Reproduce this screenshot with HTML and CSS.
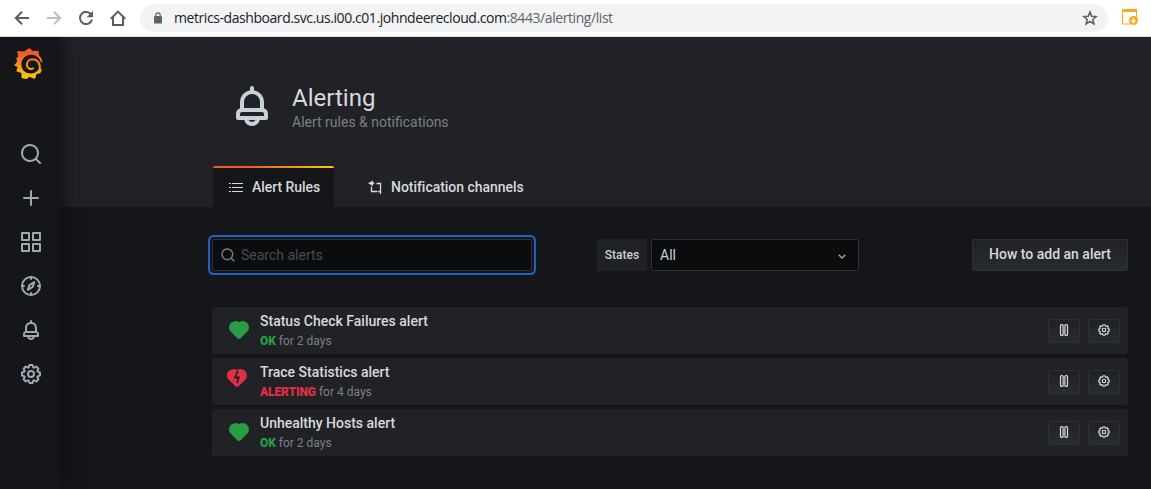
FILE: index.html
```html
<!DOCTYPE html>
<html lang="en">
<head>
<meta charset="utf-8">
<title>Alerting</title>
<link rel="stylesheet" href="styles.css">
</head>
<body>
<svg class="defs" width="0" height="0" aria-hidden="true">
  <defs>
    <symbol id="search" viewBox="0 0 24 24"><path d="M21.71,20.29,18,16.61A9,9,0,1,0,16.61,18l3.68,3.68a1,1,0,0,0,1.42,0A1,1,0,0,0,21.71,20.29ZM11,18a7,7,0,1,1,7-7A7,7,0,0,1,11,18Z"/></symbol>
    <symbol id="plus" viewBox="0 0 24 24"><path d="M19,11H13V5a1,1,0,0,0-2,0v6H5a1,1,0,0,0,0,2h6v6a1,1,0,0,0,2,0V13h6a1,1,0,0,0,0-2Z"/></symbol>
    <symbol id="apps" viewBox="0 0 24 24"><path d="M10,13H3a1,1,0,0,0-1,1v7a1,1,0,0,0,1,1h7a1,1,0,0,0,1-1V14A1,1,0,0,0,10,13ZM9,20H4V15H9ZM21,2H14a1,1,0,0,0-1,1v7a1,1,0,0,0,1,1h7a1,1,0,0,0,1-1V3A1,1,0,0,0,21,2ZM20,9H15V4h5Zm1,4H14a1,1,0,0,0-1,1v7a1,1,0,0,0,1,1h7a1,1,0,0,0,1-1V14A1,1,0,0,0,21,13Zm-1,7H15V15h5ZM10,2H3A1,1,0,0,0,2,3v7a1,1,0,0,0,1,1h7a1,1,0,0,0,1-1V3A1,1,0,0,0,10,2ZM9,9H4V4H9Z"/></symbol>
    <symbol id="compass" viewBox="0 0 24 24"><g fill="none" stroke="currentColor" stroke-width="2" stroke-linecap="round" stroke-linejoin="round"><circle cx="12" cy="12" r="9"/><path d="M12 3v2M12 19v2M3 12h2M19 12h2M15.3 8.2l-1.600 4.700-4.900 2.900 1.600-4.700z" /></g></symbol>
    <symbol id="bell" viewBox="0 0 24 24"><path d="M18,13.18V10a6,6,0,0,0-5-5.91V3a1,1,0,0,0-2,0V4.09A6,6,0,0,0,6,10v3.18A3,3,0,0,0,4,16v2a1,1,0,0,0,1,1H8.14a4,4,0,0,0,7.72,0H19a1,1,0,0,0,1-1V16A3,3,0,0,0,18,13.18ZM8,10a4,4,0,0,1,8,0v3H8Zm4,10a2,2,0,0,1-1.72-1h3.44A2,2,0,0,1,12,20Zm6-3H6V16a1,1,0,0,1,1-1H17a1,1,0,0,1,1,1Z"/></symbol>
    <symbol id="cog" viewBox="0 0 24 24"><path d="M21.32,9.55l-1.89-.63.89-1.78A1,1,0,0,0,20.13,6L18,3.87a1,1,0,0,0-1.15-.19l-1.78.89-.63-1.89A1,1,0,0,0,13.5,2h-3a1,1,0,0,0-.95.68L8.92,4.57,7.14,3.68A1,1,0,0,0,6,3.87L3.87,6a1,1,0,0,0-.19,1.15l.89,1.78-1.89.63A1,1,0,0,0,2,10.5v3a1,1,0,0,0,.68.95l1.89.63-.89,1.78A1,1,0,0,0,3.87,18L6,20.13a1,1,0,0,0,1.15.19l1.78-.89.63,1.89a1,1,0,0,0,.95.68h3a1,1,0,0,0,.95-.68l.63-1.89,1.78.89A1,1,0,0,0,18,20.13L20.13,18a1,1,0,0,0,.19-1.15l-.89-1.78,1.89-.63A1,1,0,0,0,22,13.5v-3A1,1,0,0,0,21.32,9.55ZM20,12.78l-1.2.4A2,2,0,0,0,17.64,16l.57,1.14-1.1,1.1L16,17.64a2,2,0,0,0-2.79,1.16l-.4,1.2H11.22l-.4-1.2A2,2,0,0,0,8,17.64l-1.14.57-1.1-1.1L6.36,16A2,2,0,0,0,5.2,13.18L4,12.78V11.22l1.2-.4A2,2,0,0,0,6.36,8L5.79,6.89l1.1-1.1L8,6.36A2,2,0,0,0,10.82,5.2l.4-1.2h1.56l.4,1.2A2,2,0,0,0,16,6.36l1.14-.57,1.1,1.1L17.64,8a2,2,0,0,0,1.16,2.79l1.2.4ZM12,8a4,4,0,1,0,4,4A4,4,0,0,0,12,8Zm0,6a2,2,0,1,1,2-2A2,2,0,0,1,12,14Z"/></symbol>
    <symbol id="heart" viewBox="0 0 24 24"><path d="M20.16,5A6.29,6.29,0,0,0,12,4.36a6.27,6.27,0,0,0-8.16,9.48l6.21,6.22a2.78,2.78,0,0,0,3.9,0l6.21-6.22A6.27,6.27,0,0,0,20.16,5Z"/></symbol>
    <symbol id="pause" viewBox="0 0 14 14"><g fill="none" stroke="currentColor" stroke-width="1.2"><rect x="3.5" y="1.6" width="2.6" height="10.8" rx="1"/><rect x="7.9" y="1.6" width="2.6" height="10.8" rx="1"/></g></symbol>
  </defs>
</svg>

<div class="browser">
  <svg class="nav" width="16" height="16" viewBox="0 0 16 16"><path d="M15 8H2.5M8 1.8L1.8 8 8 14.2"/></svg>
  <svg class="nav nav-off" width="16" height="16" viewBox="0 0 16 16"><path d="M1 8h12.500M8 1.800L14.200 8 8 14.200"/></svg>
  <svg class="nav" width="16" height="16" viewBox="0 0 16 16"><path d="M13.300 4.800A6.100 6.100 0 1 0 14 9.500"/><path class="solid" d="M15 .8V7.200H8.600z"/></svg>
  <svg class="nav" width="16" height="16" viewBox="0 0 16 16"><path d="M.8 8.700L8 1.600l7.200 7.100M3 7.500V15h10V7.500"/></svg>
  <div class="omnibox">
    <svg class="lock" width="8" height="12" viewBox="0 0 8 12"><rect x="0" y="4" width="8" height="7.500" rx="1"/><path class="line" d="M1.800 4.500V3a2.200 2.200 0 0 1 4.400 0v1.500" stroke-width="1.200"/></svg>
    <span class="url">metrics-dashboard.svc.us.i00.c01.johndeerecloud.com<span class="path">:8443/alerting/list</span></span>
    <svg class="star" width="16" height="16" viewBox="0 0 16 16"><path d="M8 2l1.750 4.200 4.500.35-3.450 2.950 1.080 4.400L8 11.500l-3.880 2.400 1.080-4.400L1.750 6.550l4.500-.35z"/></svg>
  </div>
  <svg class="ext" width="17" height="17" viewBox="0 0 17 17"><path class="line" d="M14.500 1v8M.5 1v14h8"/><path d="M0 0h15v3H0z"/><circle cx="11.500" cy="11.500" r="4.500"/><path d="M11.500 9v4.500M9.500 11.500l2 2 2-2" fill="none" stroke="#fff" stroke-width="1.300"/></svg>
</div>

<div class="app">
  <nav class="sidebar">
    <svg class="logo" width="30" height="32" viewBox="0 0 30 32">
      <defs><linearGradient id="flame" gradientUnits="userSpaceOnUse" x1="0" y1="5" x2="0" y2="30"><stop offset="0" stop-color="#f05a28"/><stop offset="1" stop-color="#fbca0a"/></linearGradient></defs>
      <path fill="url(#flame)" d="M15.400 0L18.600 3 24.400 2.800 25 7.200Q28 10 28.400 15L27 14Q24.300 7 17.300 6.700Q7.600 7.400 7.300 16.500Q7.800 25 16.500 25.600Q21.500 25.400 24.500 21.500L28.200 21.300 26.300 25.200 22.500 26 20.900 31 15.300 28.800 12.700 31 7.600 30 7.400 25 2.300 23.200 3.600 19 0 17.500 3.100 13.800 2.300 10 4.300 8.400 3.200 3 10 3.400z"/>
      <path d="M25.700 21.800C26.600 15.500 23.600 11.200 18.500 11.200C12.500 11.400 11.200 18.400 15.200 20.500C16.700 21.200 18 21 19 20.400" fill="none" stroke="url(#flame)" stroke-width="2" stroke-linecap="round"/>
    </svg>
    <svg class="side-icon"><use href="#search"/></svg>
    <svg class="side-icon"><use href="#plus"/></svg>
    <svg class="side-icon"><use href="#apps"/></svg>
    <svg class="side-icon"><use href="#compass"/></svg>
    <svg class="side-icon"><use href="#bell"/></svg>
    <svg class="side-icon"><use href="#cog"/></svg>
  </nav>

  <main class="main">
    <header class="page-header">
      <div class="heading">
        <svg class="heading-icon"><use href="#bell"/></svg>
        <div>
          <h1 class="title">Alerting</h1>
          <div class="subtitle">Alert rules &amp; notifications</div>
        </div>
      </div>
      <div class="tabs">
        <a class="tab tab-active">
          <svg width="14" height="14" viewBox="0 0 14 14"><path class="line" d="M0 3.500h2M3 3.500h11M0 7.500h2M3 7.500h11M0 11.500h2M3 11.500h11"/></svg>
          <span>Alert Rules</span>
        </a>
        <a class="tab">
          <svg width="14" height="14" viewBox="0 0 14 14"><path d="M0 3.200L5 .5V6z"/><path class="line" stroke-width="1.300" d="M4 3.200h2.500M8.500 3.500h4v7.500M3.500 6.500v5h6M10.300 11.500h2.200V14"/></svg>
          <span>Notification channels</span>
        </a>
      </div>
    </header>

    <section class="content">
      <div class="toolbar">
        <div class="search"><svg><use href="#search"/></svg><span>Search alerts</span></div>
        <div class="states">States</div>
        <div class="select"><span>All</span><svg width="8" height="5" viewBox="0 0 8 5"><path d="M.7 .7L4 4 7.300 .7"/></svg></div>
        <button class="btn howto">How to add an alert</button>
      </div>

      <div class="rules">
        <div class="rule">
          <svg class="state ok"><use href="#heart"/></svg>
          <div class="rule-body"><div class="rule-name">Status Check Failures alert</div><div class="rule-info"><b class="ok">OK</b> for 2 days</div></div>
          <button class="btn act"><svg><use href="#pause"/></svg></button>
          <button class="btn act"><svg><use href="#cog"/></svg></button>
        </div>
        <div class="rule">
          <svg class="state broken bad" viewBox="0 0 24 24"><use href="#heart"/><path class="crack" d="M12.800 5L10 11.500h3.700L12 17"/></svg>
          <div class="rule-body"><div class="rule-name">Trace Statistics alert</div><div class="rule-info"><b class="bad">ALERTING</b> for 4 days</div></div>
          <button class="btn act"><svg><use href="#pause"/></svg></button>
          <button class="btn act"><svg><use href="#cog"/></svg></button>
        </div>
        <div class="rule">
          <svg class="state ok"><use href="#heart"/></svg>
          <div class="rule-body"><div class="rule-name">Unhealthy Hosts alert</div><div class="rule-info"><b class="ok">OK</b> for 2 days</div></div>
          <button class="btn act"><svg><use href="#pause"/></svg></button>
          <button class="btn act"><svg><use href="#cog"/></svg></button>
        </div>
      </div>
    </section>
  </main>
</div>
</body>
</html>
```
FILE: styles.css
```css
* { box-sizing: border-box; }
body {
  margin: 0;
  height: 489px;
  overflow: hidden;
  display: flex;
  flex-direction: column;
  background: #141619;
  color: #d8d9da;
  font-family: Roboto, "Liberation Sans", sans-serif;
  font-size: 14px;
}
svg { display: block; flex: none; fill: currentColor; }
.line { fill: none; stroke: currentColor; }
.defs { position: absolute; }

.browser {
  height: 37px;
  flex: none;
  display: flex;
  align-items: center;
  gap: 16px;
  padding: 0 12px 1px 14px;
  background: #fff;
  border-bottom: 1px solid #dcdde0;
}
.nav { fill: none; stroke: #5a5d61; stroke-width: 2; }
.nav-off { stroke: #bcbec1; }
.nav .solid { fill: #5a5d61; stroke: none; }
.omnibox {
  width: 968px;
  height: 28px;
  margin-left: -2px;
  padding: 0 10px 0 14px;
  display: flex;
  align-items: center;
  border-radius: 14px;
  background: #f1f3f4;
  color: #5f6368;
}
.url {
  margin-left: 12px;
  flex: 1;
  font-family: "Open Sans", "Noto Sans", sans-serif;
  font-size: 14px;
  letter-spacing: -0.43px;
  color: #202124;
  white-space: nowrap;
}
.path { color: #5f6368; }
.star { fill: none; stroke: #5f6368; stroke-width: 1.6; }
.ext { margin-left: -2px; color: #ffa81f; }

.app { flex: 1; display: flex; overflow: hidden; }
.sidebar {
  width: 60px;
  flex: none;
  padding: 11px 0 0 19px;
  background: #141619;
  box-shadow: 0 0 16px #0b0c0e;
  z-index: 1;
  color: #9fa7b3;
}
.logo { margin: 0 0 62px -5px; }
.side-icon { width: 24px; height: 24px; margin-bottom: 20px; }

.main { flex: 1; min-width: 0; }
.page-header {
  height: 170px;
  padding: 0 23px 0 153px;
  display: flex;
  flex-direction: column;
  justify-content: space-between;
  background: #202226;
}
.heading { display: flex; gap: 16px; padding: 45px 0 0 15px; }
.heading-icon { width: 48px; height: 48px; color: #c7d0d9; }
.title { margin: 2px 0 0; font-size: 24px; line-height: 28px; font-weight: 400; }
.subtitle { margin-top: 2px; line-height: 17px; color: #7b8087; }
.tabs { display: flex; height: 41px; gap: 18px; }
.tab {
  display: flex;
  align-items: center;
  gap: 9px;
  padding: 0 0 0 16px;
  font-weight: 500;
  letter-spacing: -0.04px;
  white-space: nowrap;
}
.tab-active {
  width: 121px;
  border-radius: 2px 2px 0 0;
  background: linear-gradient(90deg, #f05a28 30%, #fbca0a 99%) top / 100% 2px no-repeat #141619;
}

.content { padding: 32px 23px 0 152px; }
.toolbar { display: flex; height: 32px; }
.search {
  width: 320px;
  padding-left: 7px;
  display: flex;
  align-items: center;
  gap: 5px;
  border: 1px solid #2c3235;
  border-radius: 2px;
  background: #0b0c0e;
  box-shadow: 0 0 0 2px #141619, 0 0 0 4px #1f60c4;
  color: #464c54;
}
.search svg { width: 16px; height: 16px; color: #7b8087; }
.states {
  width: 50px;
  margin-left: 65px;
  border-radius: 2px;
  background: #202226;
  color: #c7d0d9;
  font-size: 12px;
  font-weight: 500;
  line-height: 32px;
  text-align: center;
}
.select {
  width: 208px;
  margin-left: 4px;
  padding: 0 12px 0 8px;
  display: flex;
  align-items: center;
  justify-content: space-between;
  border: 1px solid #2c3235;
  border-radius: 2px;
  background: #0b0c0e;
  color: #c7d0d9;
}
.select svg { margin-top: 2px; fill: none; stroke: #9fa7b3; stroke-width: 1.3; }
.btn {
  border: 1px solid #2c3235;
  border-radius: 2px;
  background: linear-gradient(#202226, #272b2f);
  color: #d8d9da;
  font: 500 14px Roboto, sans-serif;
}
.howto { width: 156px; margin-left: auto; padding: 0 0 2px; white-space: nowrap; }

.rules { margin-top: 36px; display: flex; flex-direction: column; gap: 4px; }
.rule {
  height: 47px;
  padding: 0 8px 1px 15px;
  display: flex;
  align-items: center;
  border-radius: 3px;
  background: #202226;
}
.state { width: 24px; height: 24px; }
.broken { margin: -6px 2px 0 -2px; }
.crack { fill: none; stroke: #202226; stroke-width: 1.8; }
.ok { color: #299c46; }
.bad { color: #e02f44; }
.rule-body { flex: 1; margin-left: 9px; padding-top: 1px; }
.rule-name { font-weight: 500; line-height: 20px; }
.rule-info { padding-top: 1px; margin-bottom: -1px; font-size: 12px; line-height: 19px; color: #7b8087; }
.rule-info b { font-weight: 900; letter-spacing: -0.1px; }
.act {
  width: 32px;
  height: 24px;
  margin: 2px 0 0 8px;
  padding: 0 0 2px;
  display: flex;
  align-items: center;
  justify-content: center;
}
.act svg { width: 14px; height: 14px; }
```
